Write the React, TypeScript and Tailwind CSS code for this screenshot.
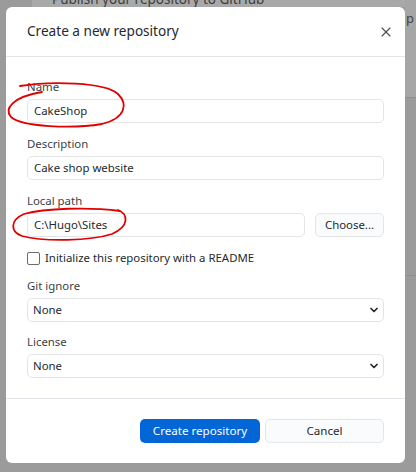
import React from "react";
import { X, ChevronDown } from "lucide-react";

const font = { fontFamily: '"Noto Sans", "Open Sans", sans-serif' };

function Label({ children }: { children: React.ReactNode }) {
  return <div className="text-[11.4px] leading-[16px] text-[#3a3f44] mb-[4px]">{children}</div>;
}

function Input({ value, className = "" }: { value: string; className?: string }) {
  return (
    <div className={`h-[24px] rounded-[5px] border border-[#e3e5e8] bg-white flex items-center px-[6px] text-[11.4px] text-[#24292e] ${className}`}>
      {value}
    </div>
  );
}

function Select({ value }: { value: string }) {
  return (
    <div className="h-[24px] rounded-[5px] border border-[#e3e5e8] bg-white flex items-center justify-between pl-[5px] pr-[3px] text-[11.4px] text-[#24292e]">
      <span>{value}</span>
      <ChevronDown size={12} strokeWidth={3.5} className="text-[#24292e]" />
    </div>
  );
}

export default function App() {
  return (
    <div className="relative w-[416px] h-[472px] overflow-hidden bg-[#9b9b9b]" style={font}>
      {/* background window behind the overlay */}
      <div className="absolute left-[32px] top-0 w-[384px] h-[7px] bg-[#a9a9a9] overflow-hidden">
        <div className="absolute left-[20px] top-[-9px] text-[13.5px] leading-[16px] text-[#3d3d3d]">Publish your repository to GitHub</div>
      </div>
      <div className="absolute left-[405px] top-0 w-[11px] h-[98px] bg-[#a6a6a6] border-b border-[#8f8f8f]">
        <div className="absolute left-[1px] top-[10px] text-[13px] leading-[16px] text-[#444]">p</div>
      </div>
      <div className="absolute left-[405px] top-[275px] w-[11px] h-[1px] bg-[#8f8f8f]" />

      <div className="relative ml-[6px] mt-[7px] w-[399px] h-[456px] bg-white rounded-[6px] flex flex-col">
        <div className="h-[50px] shrink-0 border-b border-[#e1e4e8] flex items-center justify-between pl-[21px] pr-[11px]">
          <span className="text-[13.6px] text-[#24292e]">Create a new repository</span>
          <X size={16} strokeWidth={1.7} className="text-[#4a4a4a]" />
        </div>

        <div className="flex-1 px-[21px] pt-[22px]">
          <Label>Name</Label>
          <Input value="CakeShop" />

          <div className="mt-[13px]">
            <Label>Description</Label>
            <Input value="Cake shop website" />
          </div>

          <div className="mt-[13px]">
            <Label>Local path</Label>
            <div className="flex gap-[10px]">
              <Input value="C:\Hugo\Sites" className="flex-1" />
              <div className="w-[69px] h-[24px] rounded-[5px] border border-[#e3e5e8] bg-[#fafbfc] flex items-center justify-center text-[11.4px] text-[#24292e]">
                Choose...
              </div>
            </div>
          </div>

          <div className="mt-[13px] flex items-center gap-[5px] h-[16px]">
            <div className="w-[13px] h-[13px] rounded-[2px] border border-[#6b6b6b] bg-white" />
            <span className="text-[11.4px] text-[#24292e]">Initialize this repository with a README</span>
          </div>

          <div className="mt-[12px]">
            <Label>Git ignore</Label>
            <Select value="None" />
          </div>

          <div className="mt-[12px]">
            <Label>License</Label>
            <Select value="None" />
          </div>
        </div>

        <div className="shrink-0 border-t border-[#e1e4e8] pt-[20px] pb-[20px] px-[21px] flex justify-end gap-[5px]">
          <div className="w-[120px] h-[24px] rounded-[5px] bg-[#0366d6] flex items-center justify-center text-[11.6px] text-white">
            Create repository
          </div>
          <div className="w-[119px] h-[24px] rounded-[5px] border border-[#e3e5e8] bg-[#fafbfc] flex items-center justify-center text-[11.6px] text-[#24292e]">
            Cancel
          </div>
        </div>
      </div>

      {/* red hand-drawn annotations */}
      <svg className="absolute left-0 top-0 pointer-events-none" width="416" height="472" viewBox="0 0 416 472" fill="none">
        <path
          d="M 20 86 C 50 81, 105 82, 118 94 C 128 104, 126 118, 102 124 C 72 129, 22 127, 11 117 C 4 109, 12 97, 42 92"
          stroke="#e00000"
          strokeWidth="1.8"
          strokeLinecap="round"
        />
        <path
          d="M 118 210 C 128 214, 130 226, 112 234 C 90 241, 45 242, 22 236 C 10 232, 10 220, 24 214 C 45 208, 90 207, 120 211"
          stroke="#e00000"
          strokeWidth="1.8"
          strokeLinecap="round"
        />
      </svg>
    </div>
  );
}
